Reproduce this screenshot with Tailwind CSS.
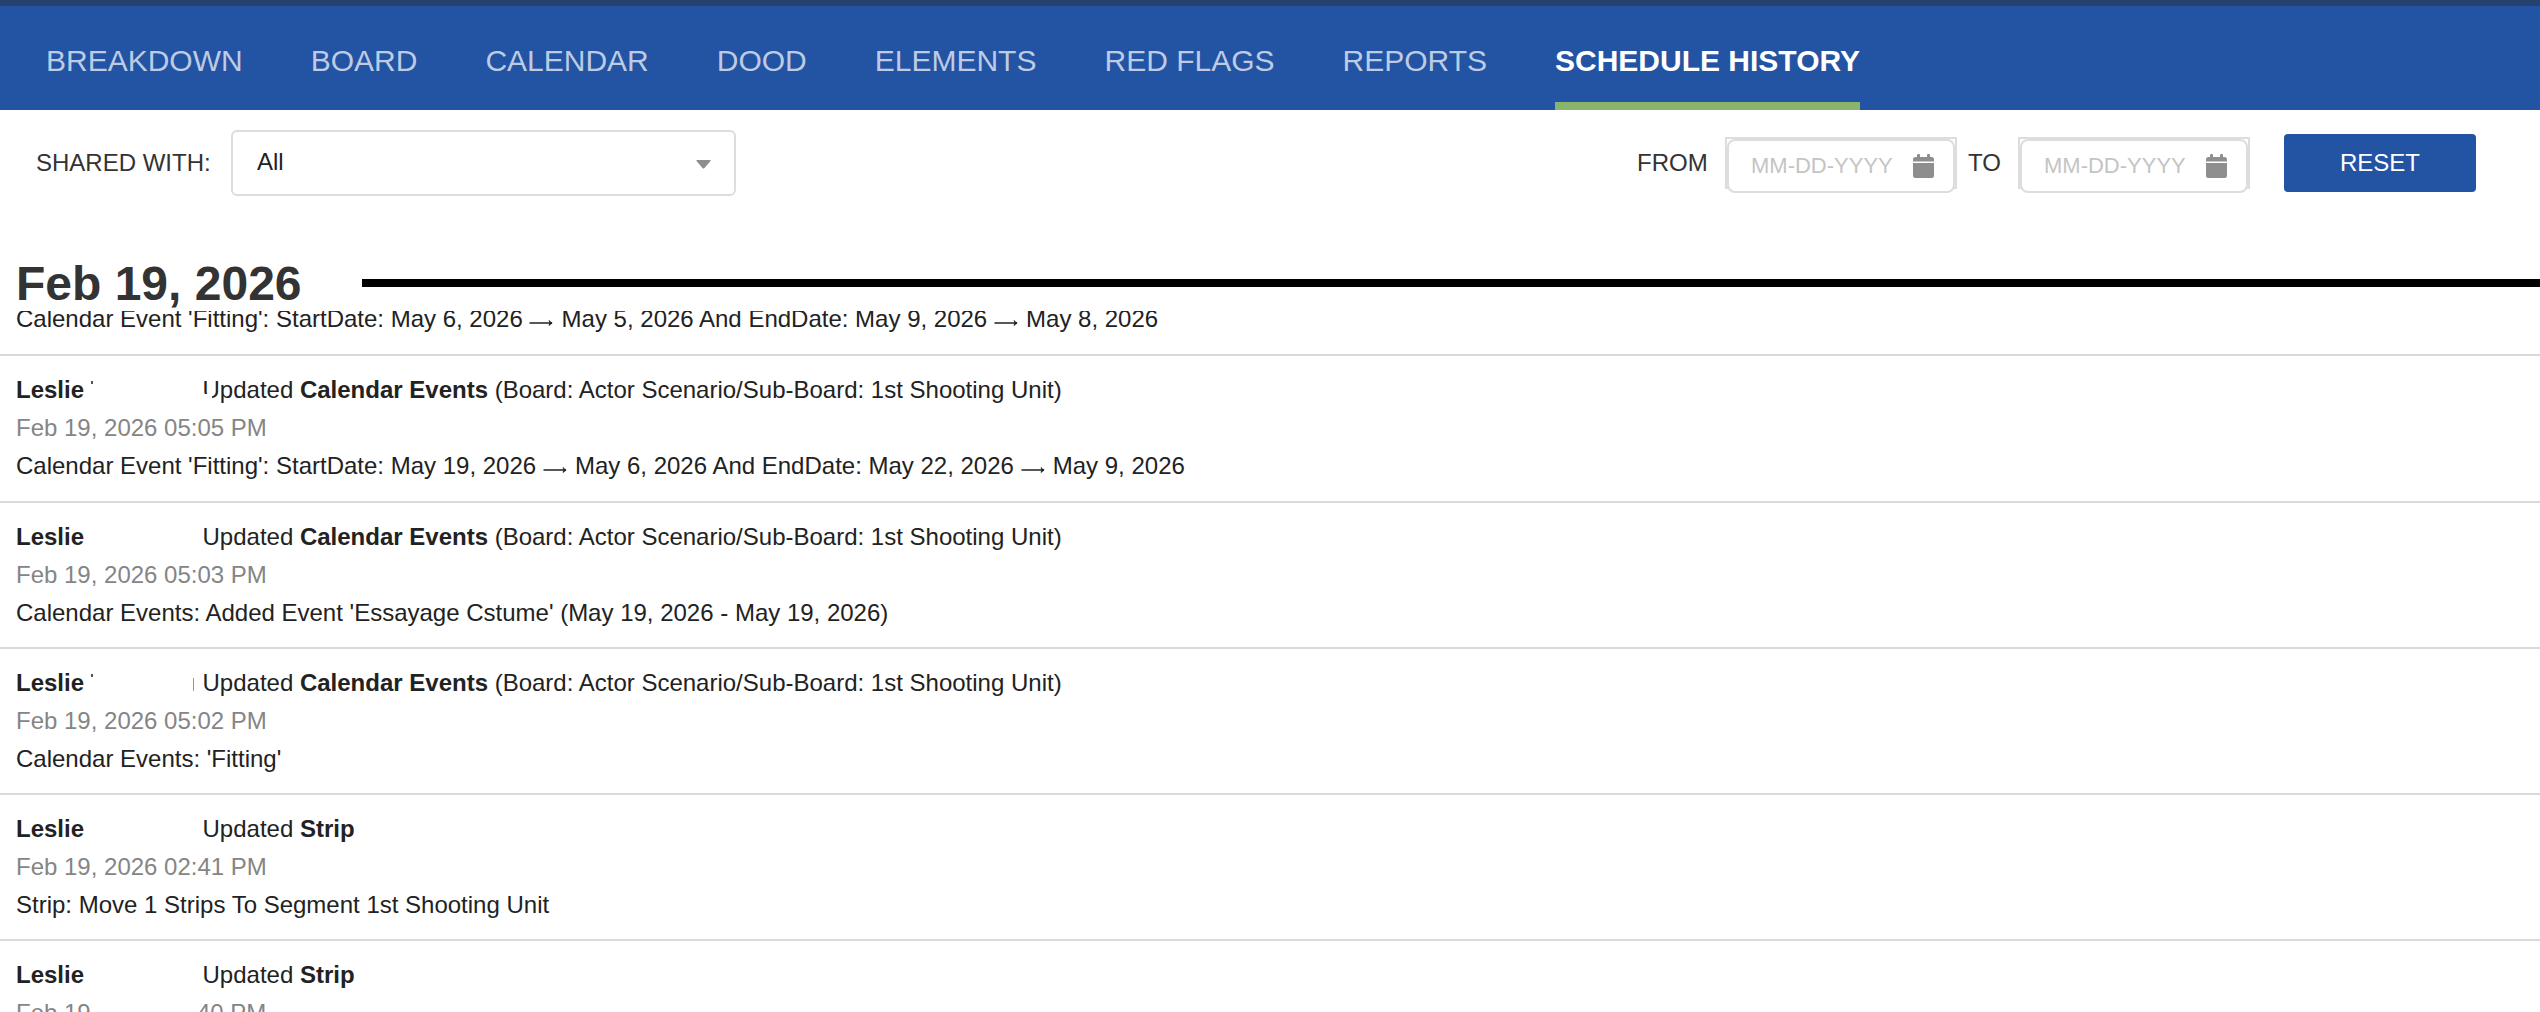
<!DOCTYPE html>
<html lang="en">
<head>
    <meta charset="UTF-8">
    <meta name="viewport" content="width=device-width, initial-scale=1.0">
    <title>Schedule History</title>
    <script src="https://cdn.jsdelivr.net/npm/@tailwindcss/browser@4"></script>
</head>
<body class="bg-white h-screen overflow-hidden flex flex-col font-['Liberation_Sans',Arial,sans-serif] text-2xl leading-[38px] text-[#222]">
    <!-- Main navigation -->
    <nav class="h-[110px] shrink-0 flex gap-[68px] pl-[46px] bg-[#2353a3] border-t-6 border-[#25426f] text-[30px] leading-[109px] text-[#bdcbe4] whitespace-nowrap">
        <a>BREAKDOWN</a>
        <a>BOARD</a>
        <a>CALENDAR</a>
        <a>DOOD</a>
        <a>ELEMENTS</a>
        <a>RED FLAGS</a>
        <a>REPORTS</a>
        <a class="h-[104px] font-bold text-white border-b-8 border-[#8ab46c]">SCHEDULE HISTORY</a>
    </nav>

    <!-- Filters -->
    <div class="h-[146px] shrink-0 flex items-start justify-between pt-5 pl-9 pr-16 text-[#333]">
        <div class="flex items-start">
            <label class="w-[195px] pt-[14px]">SHARED WITH:</label>
            <div class="w-[505px] h-[66px] flex justify-between border-2 border-[#ddd] rounded-md pl-6 pr-[23px] pt-[11px] text-[#222]">
                <span>All</span>
                <svg class="w-[15px] h-[9px] mt-[17px]" viewBox="0 0 15 9" fill="#8e8e8e"><path d="M0.5 0h14v1L8.5 8Q7.5 9 6.5 8L0.5 1z"/></svg>
            </div>
        </div>
        <div class="flex items-start">
            <label class="w-[88px] pt-[14px]">FROM</label>
            <div class="w-[232px] h-[52px] mt-[7px] border-2 border-[#ddd]">
                <div class="h-[54px] flex items-start justify-between bg-white border-2 border-[#ddd] rounded-lg pl-[22px] pr-[19px] pt-[6px] text-[22px] text-[#c4c4c4]">
                    <span>MM-DD-YYYY</span>
                    <svg class="w-[21px] h-6 mt-[7px]" viewBox="0 0 21 24" fill="#8e8e8e"><path d="M0 7.5V5.5Q0 3 2.5 3H4V1Q4 0 5 0H6Q7 0 7 1V3H14V1Q14 0 15 0H16Q17 0 17 1V3H18.5Q21 3 21 5.5V7.5ZM0 9H21V21.5Q21 24 18.5 24H2.5Q0 24 0 21.5Z"/></svg>
                </div>
            </div>
            <label class="w-[61px] pl-[11px] pt-[14px]">TO</label>
            <div class="w-[232px] h-[52px] mt-[7px] border-2 border-[#ddd]">
                <div class="h-[54px] flex items-start justify-between bg-white border-2 border-[#ddd] rounded-lg pl-[22px] pr-[19px] pt-[6px] text-[22px] text-[#c4c4c4]">
                    <span>MM-DD-YYYY</span>
                    <svg class="w-[21px] h-6 mt-[7px]" viewBox="0 0 21 24" fill="#8e8e8e"><path d="M0 7.5V5.5Q0 3 2.5 3H4V1Q4 0 5 0H6Q7 0 7 1V3H14V1Q14 0 15 0H16Q17 0 17 1V3H18.5Q21 3 21 5.5V7.5ZM0 9H21V21.5Q21 24 18.5 24H2.5Q0 24 0 21.5Z"/></svg>
                </div>
            </div>
            <button class="w-48 h-[58px] mt-1 ml-[34px] bg-[#2353a3] text-white rounded">RESET</button>
        </div>
    </div>

    <!-- Day heading -->
    <div class="h-[55px] shrink-0 flex items-start pl-4 text-[#333]">
        <h2 class="w-[346px] pt-px text-5xl leading-[54px] font-bold">Feb 19, 2026</h2>
        <div class="grow h-2 mt-[23px] bg-black"></div>
    </div>

    <!-- History entries, scrolled part way through the first one -->
    <div class="grow overflow-hidden flex flex-col whitespace-nowrap">
        <div class="h-[45px] shrink-0 flex flex-col justify-end overflow-hidden border-b-2 border-[#d9d9d9] pl-4 pb-4">
            <p>Calendar Event 'Fitting': StartDate: May 6, 2026 <svg class="inline-block align-baseline w-6 h-2 mr-[1.5px]" viewBox="0 0 24 8" fill="none" stroke="#222" stroke-width="1.3"><path d="M0.5 4H23M20 1.5Q21 3.5 23 4Q21 4.5 20 6.5"/></svg> May 5, 2026 And EndDate: May 9, 2026 <svg class="inline-block align-baseline w-6 h-2 mr-[1.5px]" viewBox="0 0 24 8" fill="none" stroke="#222" stroke-width="1.3"><path d="M0.5 4H23M20 1.5Q21 3.5 23 4Q21 4.5 20 6.5"/></svg> May 8, 2026</p>
        </div>
        <div class="h-[147px] shrink-0 border-b-2 border-[#d9d9d9] pl-4 pt-[15px]">
            <p class="relative flex"><b class="w-[186.5px]">Leslie</b><span>Updated <b>Calendar Events</b> (Board: Actor Scenario/Sub-Board: 1st Shooting Unit)</span>
                <span class="absolute left-[75px] top-[10px] w-[2px] h-[3px] bg-[#555]"></span>
                <span class="absolute left-[184px] top-[23px] w-3 h-2 bg-white"></span>
            </p>
            <p class="text-[#858585]">Feb 19, 2026 05:05 PM</p>
            <p>Calendar Event 'Fitting': StartDate: May 19, 2026 <svg class="inline-block align-baseline w-6 h-2 mr-[1.5px]" viewBox="0 0 24 8" fill="none" stroke="#222" stroke-width="1.3"><path d="M0.5 4H23M20 1.5Q21 3.5 23 4Q21 4.5 20 6.5"/></svg> May 6, 2026 And EndDate: May 22, 2026 <svg class="inline-block align-baseline w-6 h-2 mr-[1.5px]" viewBox="0 0 24 8" fill="none" stroke="#222" stroke-width="1.3"><path d="M0.5 4H23M20 1.5Q21 3.5 23 4Q21 4.5 20 6.5"/></svg> May 9, 2026</p>
        </div>
        <div class="h-[146px] shrink-0 border-b-2 border-[#d9d9d9] pl-4 pt-[15px]">
            <p class="flex"><b class="w-[186.5px]">Leslie</b><span>Updated <b>Calendar Events</b> (Board: Actor Scenario/Sub-Board: 1st Shooting Unit)</span></p>
            <p class="text-[#858585]">Feb 19, 2026 05:03 PM</p>
            <p>Calendar Events: Added Event 'Essayage Cstume' (May 19, 2026 - May 19, 2026)</p>
        </div>
        <div class="h-[146px] shrink-0 border-b-2 border-[#d9d9d9] pl-4 pt-[15px]">
            <p class="relative flex"><b class="w-[186.5px]">Leslie</b><span>Updated <b>Calendar Events</b> (Board: Actor Scenario/Sub-Board: 1st Shooting Unit)</span>
                <span class="absolute left-[75px] top-[10px] w-[2px] h-[3px] bg-[#555]"></span>
                <span class="absolute left-[177px] top-[14px] w-px h-[13px] bg-[#999]"></span>
            </p>
            <p class="text-[#858585]">Feb 19, 2026 05:02 PM</p>
            <p>Calendar Events: 'Fitting'</p>
        </div>
        <div class="h-[146px] shrink-0 border-b-2 border-[#d9d9d9] pl-4 pt-[15px]">
            <p class="flex"><b class="w-[186.5px]">Leslie</b><span>Updated <b>Strip</b></span></p>
            <p class="text-[#858585]">Feb 19, 2026 02:41 PM</p>
            <p>Strip: Move 1 Strips To Segment 1st Shooting Unit</p>
        </div>
        <div class="h-[146px] shrink-0 pl-4 pt-[15px]">
            <p class="flex"><b class="w-[186.5px]">Leslie</b><span>Updated <b>Strip</b></span></p>
            <p class="flex text-[#858585]"><span class="w-[181px]">Feb 19</span><span>40 PM</span></p>
        </div>
    </div>
</body>
</html>
